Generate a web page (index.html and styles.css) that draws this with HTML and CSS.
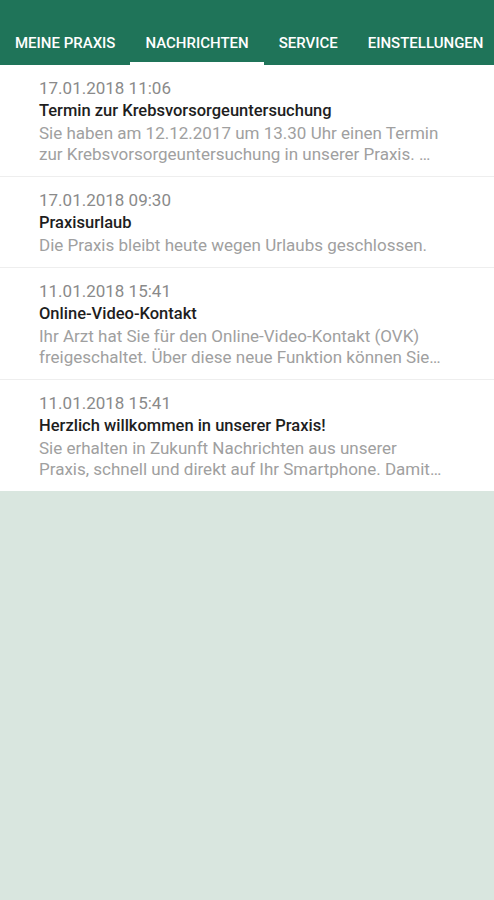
FILE: index.html
```html
<!DOCTYPE html>
<html lang="de">
<head>
  <meta charset="utf-8">
  <title>Nachrichten</title>
  <link rel="stylesheet" href="styles.css">
</head>
<body>
<div class="app">
  <div class="appbar">
    <div class="tabs">
      <div class="tab">Meine Praxis</div>
      <div class="tab active">Nachrichten</div>
      <div class="tab">Service</div>
      <div class="tab">Einstellungen</div>
    </div>
  </div>

  <div class="messages">
    <div class="msg">
      <div class="date">17.01.2018 11:06</div>
      <div class="title">Termin zur Krebsvorsorgeuntersuchung</div>
      <div class="text">Sie haben am 12.12.2017 um 13.30 Uhr einen Termin<br>zur Krebsvorsorgeuntersuchung in unserer Praxis. …</div>
    </div>
    <div class="msg">
      <div class="date">17.01.2018 09:30</div>
      <div class="title">Praxisurlaub</div>
      <div class="text">Die Praxis bleibt heute wegen Urlaubs geschlossen.</div>
    </div>
    <div class="msg">
      <div class="date">11.01.2018 15:41</div>
      <div class="title">Online-Video-Kontakt</div>
      <div class="text">Ihr Arzt hat Sie für den Online-Video-Kontakt (OVK)<br>freigeschaltet. Über diese neue Funktion können Sie…</div>
    </div>
    <div class="msg">
      <div class="date">11.01.2018 15:41</div>
      <div class="title">Herzlich willkommen in unserer Praxis!</div>
      <div class="text">Sie erhalten in Zukunft Nachrichten aus unserer<br>Praxis, schnell und direkt auf Ihr Smartphone. Damit…</div>
    </div>
  </div>
</div>
</body>
</html>
```

FILE: styles.css
```css
* { margin: 0; padding: 0; box-sizing: border-box; }
html, body { height: 100%; }
body { font-family: Roboto, "Noto Sans", Arial, sans-serif; background: #d9e6df; }

.app { min-height: 100%; display: flex; flex-direction: column; }

.appbar { background: #1f7459; height: 65px; display: flex; flex-direction: column; justify-content: flex-end; }
.tabs { display: flex; height: 44px; }
.tab {
  padding: 3px 15px 0;
  display: flex;
  align-items: center;
  color: #fff;
  font-size: 15px;
  font-weight: 500;
  text-transform: uppercase;
  white-space: nowrap;
  border-bottom: 3px solid transparent;
}
.tab.active { border-bottom-color: #fff; }

.messages { background: #fff; }
.msg { padding: 12px 20px 11px 39px; border-bottom: 1px solid #eeeeee; white-space: nowrap; }
.msg:last-child { border-bottom: none; }
.date { color: #8a8a8a; font-size: 17px; line-height: 22px; }
.title { color: #1e1e1e; font-size: 16.5px; font-weight: 500; line-height: 24px; }
.text { color: #a0a0a0; font-size: 17px; line-height: 21px; }
```
